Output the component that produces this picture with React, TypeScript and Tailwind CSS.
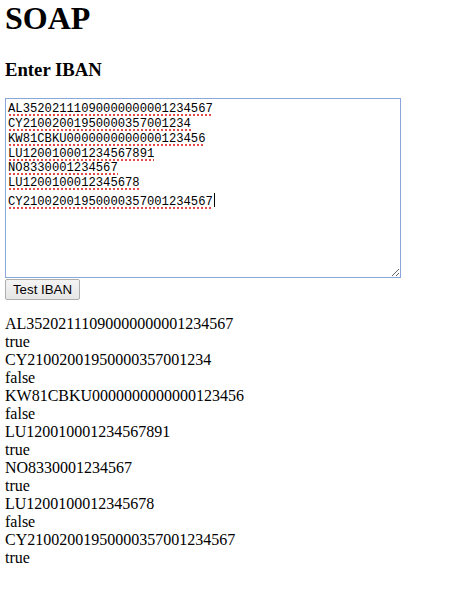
import React from "react";

const ibans = [
  "AL35202111090000000001234567",
  "CY21002001950000357001234",
  "KW81CBKU0000000000000123456",
  "LU120010001234567891",
  "NO8330001234567",
  "LU1200100012345678",
  "CY21002001950000357001234567",
];
const results = ["true", "false", "false", "true", "true", "false", "true"];

export default function App() {
  return (
    <div className="min-h-[590px] w-[463px] bg-white pl-[5px] text-black" style={{ fontFamily: '"Liberation Serif", "Times New Roman", serif' }}>
      <h1 className="m-0 text-[32px] font-bold leading-[36px]">SOAP</h1>
      <h3 className="mt-[23px] text-[18.7px] font-bold leading-[21px]">Enter IBAN</h3>
      <div className="mt-[18px] flex flex-col items-start">
        <div
          className="h-[180px] w-[396px] resize overflow-auto border border-[#8aa7dd] pl-[2px] pt-[3px] text-[12.2px] leading-[14.85px] text-black"
          style={{ fontFamily: '"Liberation Mono", "DejaVu Sans Mono", monospace' }}
        >
          {ibans.map((s, i) => (
            <div key={i} className="whitespace-pre">
              <span className="bg-[linear-gradient(135deg,transparent_35%,#e54848_35%,#e54848_65%,transparent_65%),linear-gradient(45deg,transparent_35%,#e54848_35%,#e54848_65%,transparent_65%)] bg-[length:4px_2px] bg-[position:0_100%] bg-repeat-x">{s}</span>
              {i === ibans.length - 1 && <span className="ml-[1px] inline-block h-[14px] w-[1px] translate-y-[2px] bg-black" />}
            </div>
          ))}
        </div>
        <button
          className="mt-[1px] h-[21px] w-[75px] rounded-[2px] border border-[#adadad] bg-gradient-to-b from-[#f4f4f4] to-[#e6e6e6] px-[6px] text-[13.3px] leading-[15px] text-black"
          style={{ fontFamily: '"Liberation Sans", Arial, sans-serif' }}
        >
          Test IBAN
        </button>
      </div>
      <div className="mt-[15px] text-[16px] leading-[18px]">
        {ibans.map((s, i) => (
          <React.Fragment key={i}>
            <div>{s}</div>
            <div>{results[i]}</div>
          </React.Fragment>
        ))}
      </div>
    </div>
  );
}
